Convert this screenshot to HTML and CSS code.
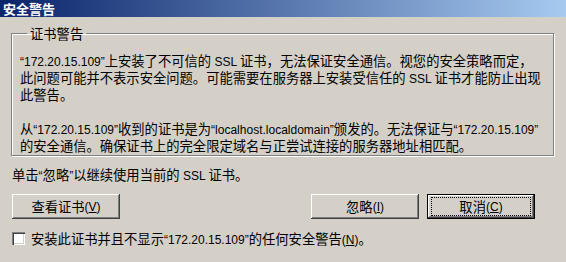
FILE: index.html
```html
<!DOCTYPE html>
<html>
<head>
<meta charset="utf-8">
<link rel="stylesheet" href="styles.css">
</head>
<body>
<div class="window">
  <div class="titlebar">安全警告</div>
  <div class="content">
    <fieldset class="group">
      <legend>证书警告</legend>
      <p class="para"><span class="lt">“172.20.15.109”</span>上安装了不可信的<span class="lt"> SSL </span>证书，无法保证安全通信。视您的安全策略而定，<br>此问题可能并不表示安全问题。可能需要在服务器上安装受信任的<span class="lt"> SSL </span>证书才能防止出现<br>此警告。</p>
      <p class="para">从<span class="lt">“172.20.15.109”</span>收到的证书是为<span class="lt">“localhost.localdomain”</span>颁发的。无法保证与<span class="lt">“172.20.15.109”</span><br>的安全通信。确保证书上的完全限定域名与正尝试连接的服务器地址相匹配。</p>
    </fieldset>
    <div class="hint">单击<span class="lt">“</span>忽略<span class="lt">”</span>以继续使用当前的<span class="lt"> SSL </span>证书。</div>
    <div class="buttons">
      <button class="btn">查看证书<span class="lt">(<u>V</u>)</span></button>
      <div class="spacer"></div>
      <button class="btn">忽略<span class="lt">(<u>I</u>)</span></button>
      <button class="btn default"><span class="focus">取消<span class="lt">(<u>C</u>)</span></span></button>
    </div>
    <label class="check"><span class="box"></span><span>安装此证书并且不显示<span class="lt">“172.20.15.109”</span>的任何安全警告<span class="lt">(<u>N</u>)</span>。</span></label>
  </div>
</div>
</body>
</html>
```
FILE: styles.css
```css
html, body {
  margin: 0;
  padding: 0;
  background: #d4d0c8;
}
body {
  width: 566px;
  height: 262px;
  overflow: hidden;
  font-family: "Liberation Sans", "Noto Sans CJK SC", sans-serif;
  font-size: 13.3px;
  color: #000;
}
.window {
  width: 566px;
  height: 262px;
  background: #d4d0c8;
}
.lt {
  font-family: "Liberation Sans", sans-serif;
  font-size: 12px;
  line-height: 12px;
}
.titlebar {
  height: 17px;
  line-height: 17px;
  padding-left: 3px;
  color: #fff;
  font-weight: bold;
  font-size: 13px;
  font-family: "Noto Sans CJK SC", sans-serif;
  background: linear-gradient(to right, #0a246a, #a6caf0);
}
.content {
  padding: 8px 12px 0 11px;
}
.group {
  margin: 0;
  padding: 11px 8px 0 8px;
  border: 1px solid #808080;
  box-shadow: inset 1px 1px 0 #fff, 1px 1px 0 #fff;
  width: 525px;
  box-sizing: content-box;
}
.group legend {
  padding: 0 3px;
  margin-left: 7px;
  line-height: 17px;
  font-family: "Noto Sans CJK SC", sans-serif;
  font-size: 13.3px;
}
.para {
  margin: 0 0 17px 0;
  line-height: 17px;
  white-space: nowrap;
}
.para:last-child {
  margin-bottom: 0;
}
.hint {
  margin-top: 11px;
  padding-left: 1px;
  line-height: 17px;
}
.buttons {
  display: flex;
  width: 523px;
  margin-top: 10px;
  gap: 8px;
  padding-left: 1px;
}
.spacer { flex: 1; }
.btn {
  width: 108px;
  height: 25px;
  background: #d4d0c8;
  border: none;
  box-shadow: inset -1px -1px 0 #404040, inset 1px 1px 0 #fff, inset -2px -2px 0 #808080;
  font-family: "Liberation Sans", "Noto Sans CJK SC", sans-serif;
  font-size: 13.3px;
  color: #000;
  padding: 0;
  display: flex;
  align-items: center;
  justify-content: center;
}
.btn.default {
  box-shadow: inset 0 0 0 1px #000, inset -2px -2px 0 #404040, inset 2px 2px 0 #fff, inset -3px -3px 0 #808080;
}
.btn .focus {
  display: flex;
  align-items: center;
  justify-content: center;
  width: 98px;
  height: 17px;
  outline: 1px dotted #000;
}
.check {
  display: flex;
  align-items: center;
  height: 17px;
  margin-top: 11px;
  padding-left: 1px;
}
.box {
  width: 13px;
  height: 13px;
  box-sizing: border-box;
  background: #fff;
  box-shadow: inset 1px 1px 0 #808080, inset 2px 2px 0 #404040, inset -1px -1px 0 #fff, inset -2px -2px 0 #d4d0c8;
  margin-right: 6px;
  flex: none;
}
```
